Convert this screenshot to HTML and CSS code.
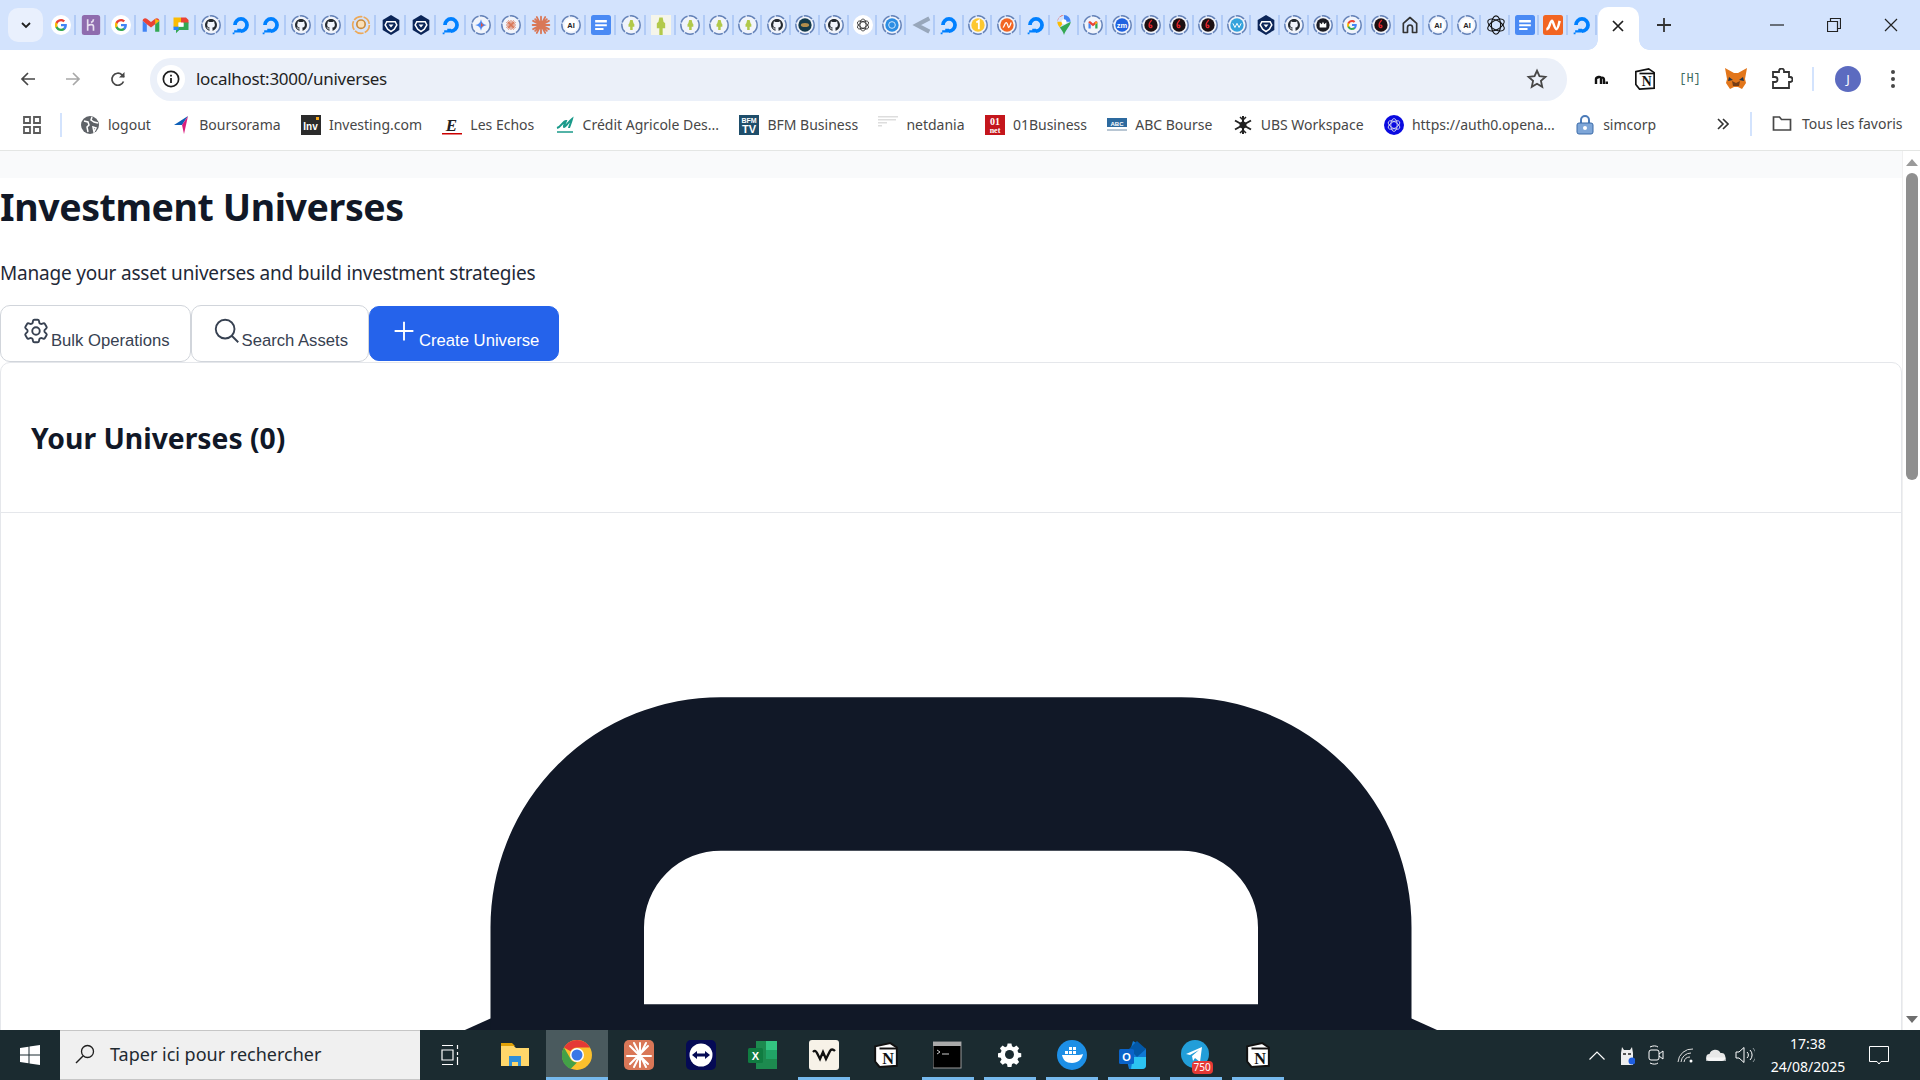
FILE: index.html
```html
<!DOCTYPE html>
<html lang="en">
<head>
  <meta charset="UTF-8">
  <title>Investment Universes</title>
  <link rel="stylesheet" href="styles.css">
</head>
<body>
<svg class="defs" aria-hidden="true">
  <symbol id="g" viewBox="0 0 24 24">
    <path fill="#4285F4" d="M22.56 12.25c0-.78-.07-1.53-.2-2.25H12v4.26h5.92c-.26 1.37-1.04 2.53-2.21 3.31v2.77h3.57c2.08-1.92 3.28-4.74 3.28-8.09z"/>
    <path fill="#34A853" d="M12 23c2.97 0 5.46-.98 7.28-2.66l-3.57-2.77c-.98.66-2.23 1.06-3.71 1.06-2.86 0-5.29-1.93-6.16-4.53H2.18v2.84C3.99 20.53 7.7 23 12 23z"/>
    <path fill="#FBBC05" d="M5.84 14.09c-.22-.66-.35-1.36-.35-2.09s.13-1.43.35-2.09V7.07H2.18C1.43 8.55 1 10.22 1 12s.43 3.45 1.18 4.93l3.66-2.84z"/>
    <path fill="#EA4335" d="M12 5.38c1.62 0 3.06.56 4.21 1.64l3.15-3.15C17.45 2.09 14.97 1 12 1 7.7 1 3.99 3.47 2.18 7.07l3.66 2.84c.87-2.6 3.3-4.53 6.16-4.53z"/>
  </symbol>
  <symbol id="g-white" viewBox="0 0 24 24"><circle cx="12" cy="12" r="12" fill="#fff"/><use href="#g" x="4" y="4" width="16" height="16"/></symbol>
  <symbol id="heroku" viewBox="0 0 24 24"><rect x="1" width="22" height="24" rx="3" fill="#8f6cae"/><path d="M8 5v14M8 13c3-2 7-2 7 1v5M15 5c0 2-1 3-3 4" fill="none" stroke="#e8dff0" stroke-width="2"/></symbol>
  <symbol id="gmail" viewBox="0 0 24 24">
    <path d="M2 20V7l5 4v9z" fill="#4285f4"/><path d="M17 20v-9l5-4v13z" fill="#34a853"/>
    <path d="M2 7c0-3 3-4 5-2.500l5 4 5-4C19 3 22 4 22 7l-5 4-5 4-5-4z" fill="#ea4335"/><path d="M17 4.500 22 7l-5 4z" fill="#fbbc04"/>
  </symbol>
  <symbol id="chat" viewBox="0 0 24 24"><path d="M3 3h9v6H9v6H3z" fill="#fbbc04"/><path d="M12 3h6l3 3v4h-9z" fill="#ea4335"/><path d="M15 9h6v9H10l-4 4v-7h3v-1h6z" fill="#34a853"/><path d="M9 9h6v5H9z" fill="#fff"/><path d="M3 14h6v4H3z" fill="#2684fc"/></symbol>
  <symbol id="gh" viewBox="0 0 24 24"><path fill="#24292f" d="M12 .5C5.65.5.5 5.65.5 12c0 5.08 3.29 9.39 7.86 10.91.58.11.79-.25.79-.56v-2.14c-3.2.7-3.87-1.36-3.87-1.36-.52-1.33-1.28-1.68-1.28-1.68-1.05-.72.08-.7.08-.7 1.16.08 1.77 1.19 1.77 1.19 1.03 1.76 2.7 1.25 3.36.96.1-.75.4-1.25.73-1.54-2.55-.29-5.24-1.28-5.24-5.69 0-1.26.45-2.28 1.19-3.09-.12-.29-.52-1.46.11-3.05 0 0 .97-.31 3.17 1.18a11 11 0 0 1 5.77 0c2.2-1.49 3.17-1.18 3.17-1.18.63 1.59.23 2.76.11 3.05.74.81 1.19 1.83 1.19 3.09 0 4.42-2.69 5.39-5.25 5.68.41.36.78 1.06.78 2.14v3.17c0 .31.21.68.8.56C20.21 21.39 23.5 17.08 23.500 12 23.500 5.65 18.35.5 12 .5z"/></symbol>
  <symbol id="do" viewBox="0 0 24 24"><path fill="#0080ff" d="M12 21.500V17a5 5 0 1 0-5-5H2.500a9.500 9.500 0 1 1 9.500 9.500z"/><path fill="#0080ff" d="M7.500 16.500H12V21H7.500zM3.800 18.200h3.700v2.800H3.800zM2 21h2.200v2H2z"/></symbol>
  <symbol id="crypto" viewBox="0 0 24 24"><path d="M12 0 22 6v12l-10 6-10-6V6z" fill="#0b2558"/><path d="M7 8h10l2 4-3 5-4 3-4-3-3-5z" fill="none" stroke="#fff" stroke-width="1.800"/><path d="M9 11.500h6L12 15z" fill="#fff"/></symbol>
  <symbol id="openai" viewBox="0 0 24 24"><g fill="none" stroke="#111" stroke-width="1.300"><ellipse cx="12" cy="12" rx="5.500" ry="11"/><ellipse cx="12" cy="12" rx="5.500" ry="11" transform="rotate(60 12 12)"/><ellipse cx="12" cy="12" rx="5.500" ry="11" transform="rotate(120 12 12)"/></g></symbol>
  <symbol id="openai-white" viewBox="0 0 24 24"><circle cx="12" cy="12" r="12" fill="#fff"/><use href="#openai" x="4" y="4" width="16" height="16"/></symbol>
  <symbol id="star-o" viewBox="0 0 24 24"><g stroke="#d97757" stroke-width="2.200" stroke-linecap="round"><path d="M12 2v20M2 12h20M5 5l14 14M19 5 5 19M7 2.500l10 19M17 2.500l-10 19M2.500 7l19 10M21.500 7l-19 10"/></g></symbol>
  <symbol id="docs" viewBox="0 0 24 24"><rect width="24" height="24" rx="3" fill="#4a8af4"/><path d="M5 6h14v3H5zM5 11h14v2.500H5zM5 15.500h10V18H5z" fill="#fff"/></symbol>
  <symbol id="nstart" viewBox="0 0 24 24"><rect width="24" height="24" rx="3" fill="#f26522"/><path d="M4 17c2 0 3-2 4-5s2-5 3-5 3 10 5 10 3-6 4-10" fill="none" stroke="#fff" stroke-width="3"/></symbol>
  <symbol id="green" viewBox="0 0 24 24"><rect width="24" height="24" fill="#f5f5ea"/><path d="M10 3h4l1 5 2 2v6h-3v8h-4v-8H7v-6l2-2z" fill="#b2c94a"/></symbol>
  <symbol id="ring" viewBox="0 0 24 24"><circle cx="12" cy="12" r="11" fill="#f1f4fb" stroke="#6482b8" stroke-width="1.800" stroke-dasharray="11 1.500"/></symbol>
  <symbol id="r-gh" viewBox="0 0 24 24"><use href="#ring"/><use href="#gh" x="4.500" y="4.500" width="15" height="15"/></symbol>
  <symbol id="r-orange" viewBox="0 0 24 24"><circle cx="12" cy="12" r="10" fill="none" stroke="#eca95a" stroke-width="2" stroke-dasharray="11 1.500"/><circle cx="12" cy="11" r="5" fill="#fbe0b8" stroke="#c98a3c" stroke-width="2"/></symbol>
  <symbol id="r-gem" viewBox="0 0 24 24"><use href="#ring"/><path d="M12 5c.6 4 3 6.400 7 7-4 .6-6.400 3-7 7-.6-4-3-6.400-7-7 4-.6 6.400-3 7-7z" fill="#4b8bf5"/><path d="M12 8c.4 2.300 1.700 3.600 4 4-2.300.4-3.600 1.700-4 4z" fill="#e2543c"/></symbol>
  <symbol id="r-claude" viewBox="0 0 24 24"><use href="#ring"/><use href="#star-o" x="5.500" y="5.500" width="13" height="13"/></symbol>
  <symbol id="r-ai" viewBox="0 0 24 24"><use href="#ring"/><circle cx="12" cy="12" r="8" fill="#fff"/><text x="12" y="15.500" class="mini">AI</text></symbol>
  <symbol id="r-green" viewBox="0 0 24 24"><use href="#ring"/><path d="M11 6h3l1 4 1 1v3h-2v4h-3v-4H9v-3l1-1z" fill="#b2c94a"/></symbol>
  <symbol id="r-turtle" viewBox="0 0 24 24"><use href="#ring"/><circle cx="12" cy="12" r="8" fill="#143a4a"/><ellipse cx="12" cy="12" rx="5" ry="2.500" fill="#b08d4c"/></symbol>
  <symbol id="r-blue" viewBox="0 0 24 24"><use href="#ring"/><circle cx="12" cy="12" r="8" fill="#2b8de3"/><circle cx="12" cy="12" r="4" fill="none" stroke="#cfe6fb" stroke-width="1.200"/></symbol>
  <symbol id="share" viewBox="0 0 24 24"><path d="M22 4 7 12l15 8" fill="none" stroke="#98a7bb" stroke-width="5"/></symbol>
  <symbol id="r-one" viewBox="0 0 24 24"><use href="#ring"/><circle cx="12" cy="12" r="8" fill="#fdc82f"/><path d="M10 9l3-2v10" fill="none" stroke="#fff" stroke-width="2.200"/></symbol>
  <symbol id="r-n" viewBox="0 0 24 24"><use href="#ring"/><circle cx="12" cy="12" r="8" fill="#f26522"/><path d="M7 15c2 0 2-6 4-6s2 6 3 6 2-3 3-6" fill="none" stroke="#fff" stroke-width="1.500"/></symbol>
  <symbol id="maps" viewBox="0 0 24 24"><path d="M12 0a8 8 0 0 1 8 8l-8-0z" fill="#4285f4"/><path d="M4 8a8 8 0 0 1 8-8l-6 3z" fill="#ea4335"/><path d="M4 8c0 3 1.500 5 3 7l5-7z" fill="#fbbc04"/><path d="M20 8c0 5-6 9-8 16-1-4-3-6-5-9l13-7z" fill="#34a853"/><circle cx="12" cy="8" r="3" fill="#fff"/></symbol>
  <symbol id="r-gmail" viewBox="0 0 24 24"><use href="#ring"/><use href="#gmail" x="5.500" y="5.500" width="13" height="13"/></symbol>
  <symbol id="r-zm" viewBox="0 0 24 24"><use href="#ring"/><circle cx="12" cy="12" r="8" fill="#1f62e0"/><text x="12" y="15" class="mini mini-w">zm</text></symbol>
  <symbol id="r-red" viewBox="0 0 24 24"><use href="#ring"/><circle cx="12" cy="12" r="8" fill="#1c1012"/><path d="M13 6c-3 3-4 5-3 8 1 2 4 1 3-1-.5-1-2-1-2 0" fill="none" stroke="#e5252a" stroke-width="1.600"/></symbol>
  <symbol id="r-wave" viewBox="0 0 24 24"><use href="#ring"/><circle cx="12" cy="12" r="8" fill="#35a3dc"/><path d="M7 10l2.500 5L12 10l2.500 5L17 10" fill="none" stroke="#fff" stroke-width="1.200"/></symbol>
  <symbol id="r-crown" viewBox="0 0 24 24"><use href="#ring"/><circle cx="12" cy="12" r="8" fill="#1b1b22"/><path d="M8 15V9l2.500 2L12 8l1.500 3L16 9v6z" fill="#fff"/></symbol>
  <symbol id="r-g" viewBox="0 0 24 24"><use href="#ring"/><use href="#g" x="5.500" y="5.500" width="13" height="13"/></symbol>
  <symbol id="home" viewBox="0 0 24 24"><path d="M4 21V10l8-7 8 7v11h-5v-6a3 3 0 0 0-6 0v6z" fill="none" stroke="#333" stroke-width="2" stroke-linejoin="round"/></symbol>
  <symbol id="notion" viewBox="0 0 24 24"><path d="M2 4 16 1l6 4v17L6 23l-4-5z" fill="#fff" stroke="#111" stroke-width="1.800"/><path d="M6 6h16" stroke="#111" stroke-width="1.800"/><text x="14" y="20" class="notion-n">N</text></symbol>
  <symbol id="close" viewBox="0 0 12 12"><path d="M1 1l10 10M11 1 1 11" stroke="#1f1f1f" stroke-width="1.700"/></symbol>
</svg>

<div class="window">
  <div class="tabstrip">
    <div class="tab-search"><svg viewBox="0 0 12 12" width="12" height="12"><path d="M2 4l4 4 4-4" fill="none" stroke="#1f1f1f" stroke-width="1.800"/></svg></div>
    <div class="favs">
      <span class="fav"><svg><use href="#g-white"/></svg></span>
      <span class="fav"><svg><use href="#heroku"/></svg></span>
      <span class="fav"><svg><use href="#g-white"/></svg></span>
      <span class="fav"><svg><use href="#gmail"/></svg></span>
      <span class="fav"><svg><use href="#chat"/></svg></span>
      <span class="fav"><svg><use href="#r-gh"/></svg></span>
      <span class="fav"><svg><use href="#do"/></svg></span>
      <span class="fav"><svg><use href="#do"/></svg></span>
      <span class="fav"><svg><use href="#r-gh"/></svg></span>
      <span class="fav"><svg><use href="#r-gh"/></svg></span>
      <span class="fav"><svg><use href="#r-orange"/></svg></span>
      <span class="fav"><svg><use href="#crypto"/></svg></span>
      <span class="fav"><svg><use href="#crypto"/></svg></span>
      <span class="fav"><svg><use href="#do"/></svg></span>
      <span class="fav"><svg><use href="#r-gem"/></svg></span>
      <span class="fav"><svg><use href="#r-claude"/></svg></span>
      <span class="fav"><svg><use href="#star-o"/></svg></span>
      <span class="fav"><svg><use href="#r-ai"/></svg></span>
      <span class="fav"><svg><use href="#docs"/></svg></span>
      <span class="fav"><svg><use href="#r-green"/></svg></span>
      <span class="fav"><svg><use href="#green"/></svg></span>
    </div>
    <div class="favs favs-narrow">
      <span class="fav"><svg><use href="#r-green"/></svg></span>
      <span class="fav"><svg><use href="#r-green"/></svg></span>
      <span class="fav"><svg><use href="#r-green"/></svg></span>
      <span class="fav"><svg><use href="#r-gh"/></svg></span>
      <span class="fav"><svg><use href="#r-turtle"/></svg></span>
      <span class="fav"><svg><use href="#r-gh"/></svg></span>
      <span class="fav"><svg><use href="#openai-white"/></svg></span>
      <span class="fav"><svg><use href="#r-blue"/></svg></span>
      <span class="fav"><svg><use href="#share"/></svg></span>
      <span class="fav"><svg><use href="#do"/></svg></span>
      <span class="fav"><svg><use href="#r-one"/></svg></span>
      <span class="fav"><svg><use href="#r-n"/></svg></span>
      <span class="fav"><svg><use href="#do"/></svg></span>
      <span class="fav"><svg><use href="#maps"/></svg></span>
      <span class="fav"><svg><use href="#r-gmail"/></svg></span>
      <span class="fav"><svg><use href="#r-zm"/></svg></span>
      <span class="fav"><svg><use href="#r-red"/></svg></span>
      <span class="fav"><svg><use href="#r-red"/></svg></span>
      <span class="fav"><svg><use href="#r-red"/></svg></span>
      <span class="fav"><svg><use href="#r-wave"/></svg></span>
      <span class="fav"><svg><use href="#crypto"/></svg></span>
      <span class="fav"><svg><use href="#r-gh"/></svg></span>
      <span class="fav"><svg><use href="#r-crown"/></svg></span>
      <span class="fav"><svg><use href="#r-g"/></svg></span>
      <span class="fav"><svg><use href="#r-red"/></svg></span>
      <span class="fav"><svg><use href="#home"/></svg></span>
      <span class="fav"><svg><use href="#r-ai"/></svg></span>
      <span class="fav"><svg><use href="#r-ai"/></svg></span>
      <span class="fav"><svg><use href="#openai"/></svg></span>
      <span class="fav"><svg><use href="#docs"/></svg></span>
      <span class="fav"><svg><use href="#nstart"/></svg></span>
      <span class="fav"><svg><use href="#do"/></svg></span>
    </div>
    <div class="tab-active"><svg width="12" height="12"><use href="#close"/></svg></div>
    <svg class="new-tab" viewBox="0 0 14 14" width="14" height="14"><path d="M7 0v14M0 7h14" stroke="#333" stroke-width="1.800"/></svg>
    <div class="win-controls">
      <svg viewBox="0 0 14 14" width="14" height="14"><path d="M0 7h14" stroke="#222" stroke-width="1.200"/></svg>
      <svg viewBox="0 0 14 14" width="14" height="14"><path d="M.5 3.500h10v10H.5zM3.500 3.500V.5h10v10h-3" fill="none" stroke="#222" stroke-width="1.200"/></svg>
      <svg viewBox="0 0 14 14" width="14" height="14"><path d="M1 1l12 12M13 1 1 13" stroke="#222" stroke-width="1.200"/></svg>
    </div>
  </div>

  <div class="toolbar">
    <div class="nav-btns">
      <svg viewBox="0 0 16 16" width="16" height="16"><path d="M15 8H2M8 2 2 8l6 6" fill="none" stroke="#474747" stroke-width="1.700"/></svg>
      <svg viewBox="0 0 16 16" width="16" height="16"><path d="M1 8h13M8 2l6 6-6 6" fill="none" stroke="#a8a8a8" stroke-width="1.700"/></svg>
      <svg viewBox="0 0 16 16" width="16" height="16"><path d="M13.500 10.500A6 6 0 1 1 12 3.800L14 6" fill="none" stroke="#474747" stroke-width="1.700"/><path d="M14.500 1v5.500H9z" fill="#474747"/></svg>
    </div>
    <div class="omnibox">
      <span class="site-info"><svg viewBox="0 0 16 16" width="18" height="18"><circle cx="8" cy="8" r="6.800" fill="none" stroke="#1f1f1f" stroke-width="1.500"/><path d="M8 7v4.500M8 4.200v1.500" stroke="#1f1f1f" stroke-width="1.600"/></svg></span>
      <span class="url">localhost:3000/universes</span>
      <svg class="star" viewBox="0 0 24 24" width="22" height="22"><path d="M12 3l2.700 6 6.500.7-4.900 4.400 1.400 6.400L12 17.200l-5.700 3.300 1.400-6.400-4.900-4.400 6.500-.7z" fill="none" stroke="#474747" stroke-width="2"/></svg>
    </div>
    <div class="ext-icons">
      <svg viewBox="0 0 20 20" width="20" height="20"><path d="M5 15V10c0-2 5-3 5-1v6M10 9c2-1 3 0 3 2v4" fill="none" stroke="#111" stroke-width="2.400"/><rect x="14.500" y="12.500" width="2.500" height="2.500" fill="#111"/></svg>
      <svg width="22" height="22"><use href="#notion"/></svg>
      <span class="ext-h">[H]</span>
      <svg viewBox="0 0 24 24" width="24" height="24"><path d="M1 1l9 5h4l9-5-2 11 1 4-4 6-4-2h-4l-4 2-4-6 1-4z" fill="#e2761b"/><path d="M8 14l4 2 4-2-1 5H9z" fill="#763d16"/><path d="M5 10l4 3-5 1zM19 10l-4 3 5 1z" fill="#233447"/></svg>
      <svg viewBox="0 0 22 22" width="22" height="22"><path d="M2 20V14h2a2.500 2.500 0 0 0 0-5H2V4h6V3a2.500 2.500 0 0 1 5 0v1h5v5h1a2.500 2.500 0 0 1 0 5h-1v6z" fill="none" stroke="#333" stroke-width="1.800"/></svg>
    </div>
    <span class="vsep"></span>
    <span class="avatar">J</span>
    <svg class="kebab" viewBox="0 0 4 18" width="4" height="18"><circle cx="2" cy="2" r="2" fill="#474747"/><circle cx="2" cy="9" r="2" fill="#474747"/><circle cx="2" cy="16" r="2" fill="#474747"/></svg>
  </div>

  <div class="bookmarks">
    <svg class="apps" viewBox="0 0 18 18" width="18" height="18"><path d="M1 1h6v6H1zM11 1h6v6h-6zM1 11h6v6H1zM11 11h6v6h-6z" fill="none" stroke="#5b5b5b" stroke-width="1.800"/></svg>
    <span class="vsep vsep-apps"></span>
    <div class="bm-list">
      <a class="bm"><svg viewBox="0 0 20 20"><circle cx="10" cy="10" r="9" fill="#5f6368"/><path d="M4 6l4 1 1 3-2 2 1 5M12 2l-1 3 3 2 4 1M13 12l3 1-2 4z" fill="none" stroke="#fff" stroke-width="1.500"/></svg>logout</a>
      <a class="bm"><svg viewBox="0 0 20 20"><path d="M17 1 3 10l8 0z" fill="#0d5fb8"/><path d="M17 1l-6 9 2 9z" fill="#d81e7c"/></svg>Boursorama</a>
      <a class="bm"><svg viewBox="0 0 20 20"><rect width="20" height="20" fill="#2b2b2b"/><text x="9.500" y="15" class="inv">Inv</text><rect x="15" y="2" width="3" height="3" fill="#f7a81b"/></svg>Investing.com</a>
      <a class="bm"><svg viewBox="0 0 20 20"><text x="9.500" y="15.500" class="echos">E</text><rect y="18" width="20" height="1.500" fill="#c00"/></svg>Les Echos</a>
      <a class="bm"><svg viewBox="0 0 20 20"><path d="M2 13c4-1 6-7 9-7-1 3-3 5-2 6 2 0 4-5 8-8-1 4-3 8-3 9" fill="none" stroke="#1a9a8a" stroke-width="2"/><path d="M2 17h16" stroke="#1a9a8a" stroke-width="1.500"/></svg>Crédit Agricole Des...</a>
      <a class="bm"><svg viewBox="0 0 20 20"><rect width="20" height="20" fill="#1f4e6b"/><text x="10" y="8" class="bfm">BFM</text><text x="10" y="18" class="bfm bfm-tv">TV</text></svg>BFM Business</a>
      <a class="bm"><svg viewBox="0 0 20 20"><path d="M0 1h20v1.500H0zM0 4h18v1.500H0zM0 7h9v1.500H0zM0 10h4v1.500H0z" fill="#ddd"/></svg>netdania</a>
      <a class="bm"><svg viewBox="0 0 20 20"><rect width="20" height="20" fill="#c4161c"/><text x="10" y="10" class="o1">01</text><text x="10" y="18" class="o1 o1-net">net</text></svg>01Business</a>
      <a class="bm"><svg viewBox="0 0 20 20"><rect y="3" width="20" height="9" fill="#2d6a9f"/><text x="10" y="10.500" class="abc">ABC</text><rect y="14" width="20" height="2" fill="#b8c6d3"/></svg>ABC Bourse</a>
      <a class="bm"><svg viewBox="0 0 20 20"><path d="M10 1v18M2 5.500l16 9M18 5.500l-16 9" stroke="#222" stroke-width="2"/><circle cx="10" cy="10" r="3.500" fill="#222"/><path d="M7 2l3 3 3-3M7 18l3-3 3 3" fill="none" stroke="#222" stroke-width="1.500"/></svg>UBS Workspace</a>
      <a class="bm"><svg viewBox="0 0 20 20"><circle cx="10" cy="10" r="10" fill="#0a0ae0"/><use href="#openai" x="3" y="3" width="14" height="14" class="invert"/></svg>https://auth0.opena...</a>
      <a class="bm"><svg viewBox="0 0 20 20"><path d="M6 8V5a4 4 0 0 1 8 0v3" fill="none" stroke="#4a7ab8" stroke-width="2"/><rect x="2" y="8" width="16" height="11" rx="2" fill="#7ea6d8" stroke="#3a6aa8"/><circle cx="10" cy="13" r="2" fill="#fff"/></svg>simcorp</a>
    </div>
    <svg class="more" viewBox="0 0 12 12" width="12" height="12"><path d="M1 1l5 5-5 5M6 1l5 5-5 5" fill="none" stroke="#333" stroke-width="1.600"/></svg>
    <span class="vsep vsep-more"></span>
    <a class="bm all-favs"><svg viewBox="0 0 20 20"><path d="M1.500 4h6l2 2.500h9V17h-17z" fill="none" stroke="#474747" stroke-width="1.700"/></svg>Tous les favoris</a>
  </div>

  <div class="viewport">
    <main class="page">
      <div class="page-top"></div>
      <h1>Investment Universes</h1>
      <p class="subtitle">Manage your asset universes and build investment strategies</p>
      <div class="actions">
        <button class="btn">
          <svg class="btn-icon" viewBox="0 0 24 24"><path d="M9.590 3.940c.09-.542.56-.940 1.110-.940h2.590c.55 0 1.020.398 1.110.940l.213 1.281c.063.374.313.686.645.870.074.040.147.083.220.127.325.196.720.257 1.075.124l1.217-.456a1.125 1.125 0 0 1 1.370.490l1.296 2.247a1.125 1.125 0 0 1-.260 1.431l-1.003.827c-.293.241-.438.613-.430.992a7.723 7.723 0 0 1 0 .255c-.008.378.137.750.430.991l1.004.827c.424.350.534.955.260 1.430l-1.298 2.247a1.125 1.125 0 0 1-1.369.491l-1.217-.456c-.355-.133-.750-.072-1.076.124a6.470 6.470 0 0 1-.220.128c-.331.183-.581.495-.644.869l-.213 1.281c-.090.543-.560.940-1.110.940h-2.594c-.550 0-1.019-.398-1.110-.940l-.213-1.281c-.062-.374-.312-.686-.644-.870a6.520 6.520 0 0 1-.220-.127c-.325-.196-.720-.257-1.076-.124l-1.217.456a1.125 1.125 0 0 1-1.369-.490l-1.297-2.247a1.125 1.125 0 0 1 .260-1.431l1.004-.827c.292-.240.437-.613.430-.991a6.932 6.932 0 0 1 0-.255c.007-.380-.138-.751-.430-.992l-1.004-.827a1.125 1.125 0 0 1-.260-1.430l1.297-2.247a1.125 1.125 0 0 1 1.370-.491l1.216.456c.356.133.751.072 1.076-.124.072-.044.146-.086.220-.128.332-.183.582-.495.644-.869l.214-1.280Z"/><path d="M15 12a3 3 0 1 1-6 0 3 3 0 0 1 6 0Z"/></svg>Bulk Operations
        </button>
        <button class="btn">
          <svg class="btn-icon" viewBox="0 0 24 24"><path d="m21 21-5.197-5.197m0 0A7.500 7.500 0 1 0 5.196 5.196a7.500 7.500 0 0 0 10.607 10.607Z"/></svg>Search Assets
        </button>
        <button class="btn btn-primary">
          <svg class="btn-icon" viewBox="0 0 24 24"><path d="M12 4.500v15m7.500-7.500h-15"/></svg>Create Universe
        </button>
      </div>
      <section class="card">
        <header class="card-header"><h2>Your Universes (0)</h2></header>
        <div class="card-empty">
          <svg class="empty-icon" viewBox="6 2.250 12 5">
            <path class="brief-body" d="M7.500 5.390 5 6.515v.7h14v-.7l-2.500-1.125z"/>
            <path class="brief-line" d="M8.250 6V4.500A1.500 1.500 0 0 1 9.750 3h4.500a1.500 1.500 0 0 1 1.500 1.500V6z"/>
          </svg>
        </div>
      </section>
    </main>
    <div class="scrollbar">
      <span class="arrow arrow-up"></span>
      <span class="thumb"></span>
      <span class="arrow arrow-down"></span>
    </div>
  </div>

  <footer class="taskbar">
    <div class="start"><svg viewBox="0 0 20 20" width="20" height="20"><path d="M0 3l8.500-1.200v7.700H0zM9.500 1.600 20 0v9.500H9.500zM0 10.500h8.500v7.700L0 17zM9.500 10.500H20V20L9.500 18.400z" fill="#fff"/></svg></div>
    <div class="search">
      <svg viewBox="0 0 20 20" width="20" height="20"><circle cx="12.500" cy="7.500" r="6" fill="none" stroke="#1f1f1f" stroke-width="1.300"/><path d="M8 12l-7 7" stroke="#1f1f1f" stroke-width="1.500"/></svg>
      <span>Taper ici pour rechercher</span>
    </div>
    <div class="task-view"><svg viewBox="0 0 20 20" width="20" height="20"><path d="M1 .5h11M1 19.500h11M1 5h11v10H1zM16.500 0v4M16.500 7v3M16.500 12v8" fill="none" stroke="#fff" stroke-width="1.200"/></svg></div>
    <div class="task-apps">
      <span class="app"><svg viewBox="0 0 30 30"><path d="M1 5h12l3 3h13v18H1z" fill="#ffd76a"/><path d="M1 3h11l3 3H1z" fill="#e0a106"/><path d="M9 16h12v10h-3v-4h-6v4H9z" fill="#2f8fd8"/></svg></span>
      <span class="app app-chrome open"><svg viewBox="0 0 30 30"><circle cx="15" cy="15" r="15" fill="#fbc02d"/><path d="M15 0a15 15 0 0 1 13 7.500H15a7.500 7.500 0 0 0-6.500 3.750L2 7.500A15 15 0 0 1 15 0z" fill="#e53935"/><path d="M2 7.500l6.500 11.250A7.500 7.500 0 0 0 15 22.500L8.500 29A15 15 0 0 1 2 7.500z" fill="#43a047"/><circle cx="15" cy="15" r="7" fill="#fff"/><circle cx="15" cy="15" r="5.500" fill="#3b78e7"/></svg></span>
      <span class="app"><svg viewBox="0 0 30 30"><rect width="30" height="30" rx="5" fill="#d97757"/><path d="M16 3v24M6 6l18 18M24 6 6 24M3 16h24M10 3l12 24M22 3 10 27" stroke="#fff" stroke-width="2" stroke-linecap="round"/></svg></span>
      <span class="app"><svg viewBox="0 0 30 30"><rect width="30" height="30" rx="5" fill="#050a55"/><circle cx="15" cy="15" r="11.500" fill="#fff"/><path d="M6 15l5-4v2.500h8V11l5 4-5 4v-2.500h-8V19z" fill="#050a55"/></svg></span>
      <span class="app"><svg viewBox="0 0 30 30"><path d="M8 1h21v28H8z" fill="#1d8a4f"/><path d="M18 1h11v9H18z" fill="#33c481"/><path d="M18 10h11v9H18z" fill="#21a366"/><rect y="8" width="15" height="15" rx="1.500" fill="#107c41"/><text x="7.500" y="20" class="app-x">X</text></svg></span>
      <span class="app open"><svg viewBox="0 0 30 30"><rect width="30" height="30" rx="3" fill="#f7f2e8"/><path d="M4 12c2-2 3-1 4 1l3 6 3-7 3 7 4-8c1-2 3-2 5 0" fill="none" stroke="#111" stroke-width="2.400"/></svg></span>
      <span class="app app-small"><svg viewBox="0 0 24 24"><use href="#notion"/></svg></span>
      <span class="app open"><svg viewBox="0 0 30 30"><rect y="2" width="28" height="26" fill="#000" stroke="#999"/><rect y="2" width="28" height="4" fill="#aaa"/><path d="M4 10l3 2-3 2M9 14h7" fill="none" stroke="#ccc"/></svg></span>
      <span class="app app-gear open"><svg viewBox="0 0 24 24"><path d="M10 1h4l.6 3 2 .9 2.600-1.700 2.800 2.800-1.700 2.600.9 2 3 .6v4l-3 .6-.9 2 1.700 2.600-2.800 2.800-2.600-1.700-2 .9-.6 3h-4l-.6-3-2-.9-2.600 1.700-2.800-2.800 1.700-2.600-.9-2-3-.6v-4l3-.6.9-2L2 6l2.800-2.800 2.600 1.700 2-.9z" transform="translate(0 -.5) scale(.96)" fill="#fff"/><circle cx="11.500" cy="11.500" r="4.500" fill="#1b2b30"/></svg></span>
      <span class="app open"><svg viewBox="0 0 30 30"><circle cx="15" cy="15" r="15" fill="#1d8fe6"/><path d="M5 15h17c2 0 3-1 4-1-1 5-5 9-11 9-6 0-9-3-10-8z" fill="#fff"/><path d="M8 11h3v3H8zM12 11h3v3h-3zM16 11h3v3h-3zM12 7h3v3h-3zM16 7h3v3h-3z" fill="#fff"/></svg></span>
      <span class="app open"><svg viewBox="0 0 30 30"><path d="M14 1l13 8v16a4 4 0 0 1-4 4H10l-2-8z" fill="#0f78d4"/><path d="M10 9 18 1l9 8-9 8z" fill="#0358a7"/><path d="M14 17h13v8a4 4 0 0 1-4 4H12z" fill="#2cc3f2"/><rect y="9" width="15" height="15" rx="1.500" fill="#0a63c9"/><text x="7.500" y="21" class="app-o">O</text></svg></span>
      <span class="app app-tg open"><svg viewBox="0 0 30 30"><circle cx="14" cy="14" r="14" fill="#229ed9"/><path d="M5 14l16-7-2 15-5-4-2 3-1-5 7-6-9 5z" fill="#fff"/></svg><span class="badge">750</span></span>
      <span class="app app-small open"><svg viewBox="0 0 24 24"><use href="#notion"/></svg></span>
    </div>
    <div class="tray">
      <span class="tray-cell"><svg viewBox="0 0 16 9" width="16" height="9"><path d="M.5 8.500 8 1l7.500 7.500" fill="none" stroke="#fff" stroke-width="1.200"/></svg></span>
      <span class="tray-cell"><svg viewBox="0 0 16 20" width="16" height="20"><path d="M2 20V8l1-6 2 3h6l2-3 1 6v12z" fill="#eee"/><circle cx="13" cy="16" r="3.500" fill="#1f5fe0"/><path d="M4 9h8" stroke="#555" stroke-width="2" stroke-dasharray="3 2"/></svg></span>
      <span class="tray-cell"><svg viewBox="0 0 16 20" width="16" height="20"><rect x="1" y="5" width="10" height="10" rx="2" fill="none" stroke="#fff"/><path d="M11 9l4-3v8l-4-3M2 2c3-1.500 6-1.500 8 0M2 18c3 1.500 6 1.500 8 0" fill="none" stroke="#fff"/></svg></span>
      <span class="tray-cell"><svg viewBox="0 0 18 18" width="18" height="18"><path d="M1 16a14 14 0 0 1 15-13M4 16a10 10 0 0 1 10-9M7 16a6 6 0 0 1 6-5" fill="none" stroke="#ddd" stroke-width="1"/><circle cx="14" cy="15" r="1.500" fill="#fff"/></svg></span>
      <span class="tray-cell"><svg viewBox="0 0 20 14" width="20" height="14"><path d="M4 13a3.500 3.500 0 0 1-.5-7A6 6 0 0 1 14.500 5 4 4 0 0 1 16 13z" fill="#e8e8e8"/><path d="M0 9.500h20V13H0z" fill="#fff" opacity=".6"/></svg></span>
      <span class="tray-cell"><svg viewBox="0 0 20 18" width="20" height="18"><path d="M1 6h3l5-4.500v15L4 12H1z" fill="none" stroke="#fff"/><path d="M12 6a4 4 0 0 1 0 6M15 4a7 7 0 0 1 0 10" fill="none" stroke="#fff"/><path d="M18 2a10 10 0 0 1 0 14" fill="none" stroke="#8a9599"/></svg></span>
      <div class="clock"><span>17:38</span><span>24/08/2025</span></div>
      <svg class="notif" viewBox="0 0 20 19" width="20" height="19"><path d="M.5.500h19v15H12l-2 2.500-2-2.500H.5z" fill="none" stroke="#fff"/></svg>
    </div>
  </footer>
</div>
</body>
</html>
```

FILE: styles.css
```css
* {
  box-sizing: border-box;
}
body {
  margin: 0;
  font-family: "Noto Sans", sans-serif;
  background: #fff;
}
.defs {
  display: none;
}
.mini {
  font: bold 9px "Liberation Sans", sans-serif;
  text-anchor: middle;
  fill: #222;
}
.mini-w {
  fill: #fff;
}
.notion-n {
  font: bold 15px "Liberation Serif", serif;
  text-anchor: middle;
  fill: #111;
}
.window {
  width: 1920px;
  height: 1080px;
  display: flex;
  flex-direction: column;
  overflow: hidden;
}

/* tab strip */
.tabstrip {
  height: 50px;
  flex: none;
  background: #d3e3fd;
  display: flex;
  align-items: flex-start;
  padding-left: 8px;
}
.tab-search {
  width: 35px;
  height: 34px;
  margin: 8px 3px 0 0;
  background: #e9f0fd;
  border-radius: 10px;
  display: flex;
  align-items: center;
  justify-content: center;
}
.favs {
  display: flex;
  margin-top: 15px;
}
.fav {
  width: 30px;
  height: 20px;
  display: flex;
  justify-content: center;
  border-right: 2px solid #b1cbf6;
}
.favs-narrow .fav {
  width: 28.770px;
}
.fav svg {
  width: 20px;
  height: 20px;
  position: relative;
  left: 1px;
}
.tab-active {
  position: relative;
  width: 41px;
  height: 43px;
  margin: 7px 0 0 1px;
  background: #fff;
  border-radius: 10px 10px 0 0;
  display: flex;
  align-items: center;
  justify-content: center;
  padding-bottom: 6px;
}
.tab-active::before, .tab-active::after {
  content: "";
  position: absolute;
  bottom: 0;
  width: 10px;
  height: 10px;
}
.tab-active::before {
  left: -10px;
  background: radial-gradient(circle at 0 0, transparent 9.500px, #fff 10px);
}
.tab-active::after {
  right: -10px;
  background: radial-gradient(circle at 100% 0, transparent 9.500px, #fff 10px);
}
.new-tab {
  margin: 18px 0 0 18px;
}
.win-controls {
  margin: 18px 22px 0 auto;
  display: flex;
  gap: 43px;
}

/* toolbar */
.toolbar {
  height: 51px;
  flex: none;
  background: #fff;
  border-radius: 10px 10px 0 0;
  display: flex;
  align-items: center;
  padding: 7px 0 0 20px;
}
.nav-btns {
  display: flex;
  gap: 29px;
  width: 130px;
}
.omnibox {
  width: 1417px;
  height: 43px;
  background: #ebf0f9;
  border-radius: 21px;
  display: flex;
  align-items: center;
  padding-left: 7px;
}
.site-info {
  width: 28px;
  height: 28px;
  background: #fff;
  border-radius: 50%;
  display: flex;
  align-items: center;
  justify-content: center;
}
.url {
  margin-left: 11px;
  padding-bottom: 2px;
  font-size: 17px;
  letter-spacing: -.3px;
  color: #1f1f1f;
}
.star {
  margin: 0 19px 0 auto;
}
.ext-icons {
  display: flex;
  align-items: center;
  gap: 23px;
  margin-left: 24px;
  width: 224px;
}
.ext-h {
  font: 12px "Liberation Mono", monospace;
  color: #3d6b60;
  width: 22px;
  text-align: center;
}
.vsep {
  width: 2px;
  height: 24px;
  background: #d3e3fd;
}
.ext-icons + .vsep {
  margin-left: -3px;
}
.avatar {
  width: 26px;
  height: 26px;
  margin-left: 21px;
  border-radius: 50%;
  background: #5c6bc0;
  color: #fff;
  font-size: 13px;
  display: flex;
  align-items: center;
  justify-content: center;
}
.kebab {
  margin-left: 30px;
}

/* bookmarks */
.bookmarks {
  height: 50px;
  flex: none;
  background: #fff;
  border-bottom: 1px solid #e4e6e4;
  display: flex;
  align-items: center;
  padding: 0 0 2px 23px;
}
.vsep-apps {
  margin: 0 18px 0 19px;
}
.bm-list {
  display: flex;
  gap: 20.300px;
}
.bm {
  display: flex;
  align-items: center;
  gap: 8px;
  font-size: 14px;
  color: #474747;
  white-space: nowrap;
}
.bm svg {
  width: 20px;
  height: 20px;
  flex: none;
}
.more {
  position: absolute;
  left: 1717px;
  top: 118px;
}
.vsep-more {
  position: absolute;
  left: 1750px;
  top: 112px;
}
.all-favs {
  position: absolute;
  left: 1772px;
  top: 113px;
  gap: 10px;
}
.invert {
  filter: invert(1);
}
.inv {
  font: bold 10px "Liberation Sans", sans-serif;
  text-anchor: middle;
  fill: #fff;
}
.echos {
  font: italic bold 17px "Liberation Serif", serif;
  text-anchor: middle;
  fill: #222;
}
.bfm {
  font: bold 7px "Liberation Sans", sans-serif;
  text-anchor: middle;
  fill: #fff;
}
.bfm-tv {
  font-size: 11px;
}
.o1 {
  font: bold 10px "Liberation Serif", serif;
  text-anchor: middle;
  fill: #fff;
}
.o1-net {
  font-size: 8px;
}
.abc {
  font: bold 6px "Liberation Sans", sans-serif;
  text-anchor: middle;
  fill: #fff;
}

/* page */
.viewport {
  flex: 1;
  min-height: 0;
  display: flex;
}
.page {
  flex: 1;
  min-width: 0;
  overflow: hidden;
  color: #111827;
}
.page-top {
  height: 27px;
  background: #f9fafb;
}
h1 {
  margin: 6px 0 30px;
  font-size: 37.500px;
  letter-spacing: -.4px;
  line-height: 45px;
  font-weight: 700;
}
.subtitle {
  margin: 0 0 18px;
  font-size: 19px;
  letter-spacing: -.2px;
  line-height: 28px;
  color: #1f2937;
}
.actions {
  display: flex;
  align-items: center;
  height: 57px;
}
.btn {
  height: 57px;
  padding: 0 20px;
  background: #fff;
  border: 1px solid #d1d5db;
  border-radius: 10px;
  font: 16.670px "Liberation Sans", Arial, sans-serif;
  color: #374151;
  white-space: nowrap;
}
.btn-primary {
  height: 55px;
  padding: 0 19px;
  background: #2563eb;
  border-color: #2563eb;
  color: #fff;
}
.btn-icon {
  width: 30px;
  height: 30px;
  fill: none;
  stroke: currentColor;
  stroke-width: 1.500;
}
.card {
  border: 1px solid #e5e7eb;
  border-radius: 10px;
  background: #fff;
}
.card-header {
  height: 150px;
  padding: 0 30px;
  border-bottom: 1px solid #e5e7eb;
  display: flex;
  align-items: center;
}
h2 {
  margin: 0;
  font-size: 28.300px;
  font-weight: 700;
}
.card-empty {
  padding-top: 184px;
}
.empty-icon {
  display: block;
  width: 1228px;
  height: 512px;
  margin: 0 auto;
}
.brief-line {
  fill: none;
  stroke: #111827;
  stroke-width: 1.500;
}
.brief-body {
  fill: #111827;
}

/* scrollbar */
.scrollbar {
  width: 18px;
  flex: none;
  background: #fff;
  border-left: 1px solid #f0f0f0;
  display: flex;
  flex-direction: column;
  align-items: center;
  padding: 8px 0 7px;
}
.arrow {
  width: 0;
  height: 0;
  border-left: 6px solid transparent;
  border-right: 6px solid transparent;
}
.arrow-up {
  border-bottom: 7px solid #9a9a9a;
}
.arrow-down {
  border-top: 7px solid #6e6e6e;
  margin-top: auto;
}
.thumb {
  width: 12px;
  height: 307px;
  margin-top: 7px;
  background: #8f8f8f;
  border-radius: 6px;
}

/* taskbar */
.taskbar {
  height: 50px;
  flex: none;
  background: #1b2b30;
  display: flex;
  align-items: center;
}
.start {
  width: 60px;
  display: flex;
  justify-content: center;
}
.search {
  width: 360px;
  height: 50px;
  background: #f0f0f0;
  border: 1px solid #c6c6c6;
  border-width: 1px 0;
  display: flex;
  align-items: center;
  gap: 15px;
  padding: 0 0 2px 15px;
  font-size: 18px;
  color: #1f2a30;
}
.task-view {
  width: 62px;
  display: flex;
  justify-content: center;
}
.task-apps {
  display: flex;
  margin-left: 2px;
}
.app {
  width: 61.900px;
  height: 50px;
  display: flex;
  align-items: center;
  justify-content: center;
  position: relative;
}
.app svg {
  width: 30px;
  height: 30px;
}
.app-small svg {
  width: 26px;
  height: 26px;
}
.app-gear svg {
  width: 24px;
  height: 24px;
}
.app.open::after {
  content: "";
  position: absolute;
  left: 5px;
  right: 5px;
  bottom: 0;
  height: 3px;
  background: #76b9ed;
}
.app-chrome {
  background: #4a5a5e;
}
.app-chrome.open::after {
  left: 0;
  right: 0;
}
.app-x, .app-o {
  font: bold 11px "Liberation Sans", sans-serif;
  text-anchor: middle;
  fill: #fff;
}
.badge {
  position: absolute;
  right: 14px;
  bottom: 6px;
  padding: 0 2px;
  font-size: 10px;
  line-height: 13px;
  background: #e53935;
  border-radius: 4px;
  color: #fff;
}
.tray {
  margin-left: auto;
  display: flex;
  align-items: center;
  padding-right: 31px;
  color: #fff;
}
.tray-cell {
  width: 29.600px;
  display: flex;
  justify-content: center;
}
.clock {
  width: 76px;
  margin-left: 10px;
  display: flex;
  flex-direction: column;
  align-items: center;
  font-size: 14px;
  line-height: 23px;
  white-space: nowrap;
}
.notif {
  margin-left: 23px;
}
```
